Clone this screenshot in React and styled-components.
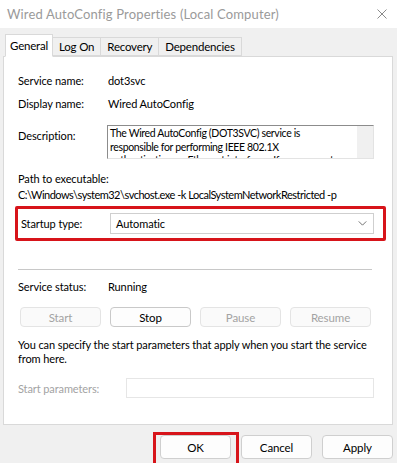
import React from 'react'
import styled, { createGlobalStyle } from 'styled-components'

const GlobalStyle = createGlobalStyle`
    html, body {
        margin: 0;
        padding: 0;
        width: 397px;
        height: 463px;
        overflow: hidden;
        background: #f0f0f0;
    }
    body {
        font-family: Lato, "Liberation Sans", sans-serif;
        font-size: 11px;
        letter-spacing: -0.1px;
        color: #000;
    }
`

const tabs = ['General', 'Log On', 'Recovery', 'Dependencies']

const serviceButtons = [
    { label: 'Start', disabled: true },
    { label: 'Stop', disabled: false },
    { label: 'Pause', disabled: true },
    { label: 'Resume', disabled: true },
]

const App = () => {
    return (
        <Window>
            <GlobalStyle />
            <TitleBar>
                <Title>Wired AutoConfig Properties (Local Computer)</Title>
                <CloseIcon viewBox="0 0 10 10">
                    <path d="M0.5 0.5 L9.5 9.5 M9.5 0.5 L0.5 9.5" stroke="#8a8a8a" strokeWidth="1" />
                </CloseIcon>
            </TitleBar>

            <TabRow>
                {tabs.map((t, i) => (
                    <Tab key={t} active={i === 0}>{t}</Tab>
                ))}
            </TabRow>

            <Panel>
                <InfoRow>
                    <Label>Service name:</Label>
                    <Value>dot3svc</Value>
                </InfoRow>
                <InfoRow gap={7}>
                    <Label>Display name:</Label>
                    <Value>Wired AutoConfig</Value>
                </InfoRow>
                <InfoRow gap={13}>
                    <Label offset={3}>Description:</Label>
                    <DescBox>
                        <DescText>
                            The Wired AutoConfig (DOT3SVC) service is<br />
                            responsible for performing IEEE 802.1X<br />
                            authentication on Ethernet interfaces. If your current
                        </DescText>
                        <ScrollTrack />
                    </DescBox>
                </InfoRow>

                <PathLabel>Path to executable:</PathLabel>
                <PathValue>C:\Windows\system32\svchost.exe -k LocalSystemNetworkRestricted -p</PathValue>

                <Highlight>
                    <Label>Startup type:</Label>
                    <Select>
                        <span>Automatic</span>
                        <Chevron viewBox="0 0 10 6">
                            <path d="M0.5 0.5 L5 5 L9.5 0.5" fill="none" stroke="#555" strokeWidth="1" />
                        </Chevron>
                    </Select>
                </Highlight>

                <Separator />

                <InfoRow gap={9}>
                    <Label>Service status:</Label>
                    <Value>Running</Value>
                </InfoRow>

                <ButtonRow>
                    {serviceButtons.map(b => (
                        <ServiceButton key={b.label} disabled={b.disabled}>{b.label}</ServiceButton>
                    ))}
                </ButtonRow>

                <Note>
                    You can specify the start parameters that apply when you start the service<br />
                    from here.
                </Note>

                <ParamRow>
                    <ParamLabel>Start parameters:</ParamLabel>
                    <ParamInput />
                </ParamRow>
            </Panel>

            <Footer>
                <OkFrame>
                    <DialogButton>OK</DialogButton>
                </OkFrame>
                <DialogButton>Cancel</DialogButton>
                <DialogButton>Apply</DialogButton>
            </Footer>
        </Window>
    )
}

export default App

const Window = styled.div`
    width: 397px;
    height: 463px;
    background: #f0f0f0;
    display: flex;
    flex-direction: column;
    overflow: hidden;
    & > * {
        flex-shrink: 0;
    }
`

// Title bar
const TitleBar = styled.div`
    height: 28px;
    background: #fff;
    display: flex;
    align-items: center;
    justify-content: space-between;
    padding: 0 5px 0 7px;
`

const Title = styled.div`
    font-size: 13px;
    color: #9a9a9a;
    letter-spacing: 0.15px;
`

const CloseIcon = styled.svg`
    width: 10px;
    height: 10px;
    margin-right: 5px;
`

// Tabs
const TabRow = styled.div`
    display: flex;
    align-items: flex-end;
    margin-top: 8px;
    padding-left: 5px;
    height: 20px;
    position: relative;
    z-index: 1;
`

const Tab = styled.div`
    height: ${p => (p.active ? '21px' : '17px')};
    padding: 0 ${p => (p.active ? '4px' : '6px')};
    margin-right: -1px;
    display: flex;
    align-items: center;
    background: ${p => (p.active ? '#fff' : '#f0f0f0')};
    border: 1px solid #d9d9d9;
    border-bottom: 1px solid ${p => (p.active ? '#fff' : '#d9d9d9')};
    margin-bottom: ${p => (p.active ? '-1px' : '0')};
    font-size: 11.5px;
    letter-spacing: -0.2px;
`

// Panel
const Panel = styled.div`
    margin: 0 4px 0 3px;
    height: 369px;
    box-sizing: border-box;
    background: #fff;
    border: 1px solid #d9d9d9;
    padding: 16px 18px 0 14px;
    display: flex;
    flex-direction: column;
    & > * {
        flex-shrink: 0;
    }
`

const InfoRow = styled.div`
    display: grid;
    grid-template-columns: 90px 1fr;
    align-items: start;
    margin-top: ${p => p.gap || 0}px;
    line-height: 16px;
`

const Label = styled.div`
    margin-top: ${p => p.offset || 0}px;
    white-space: nowrap;
`

const Value = styled.div`
    white-space: nowrap;
`

const DescBox = styled.div`
    height: 34px;
    box-sizing: border-box;
    border: 1px solid #e3e3e3;
    border-top-color: #8c8c8c;
    border-left-color: #8c8c8c;
    display: flex;
    overflow: hidden;
    margin-left: -1px;
`

const DescText = styled.div`
    flex: 1;
    padding: 1px 2px 0 2px;
    font-size: 10.5px;
    letter-spacing: -0.35px;
    line-height: 13.5px;
    white-space: nowrap;
    overflow: hidden;
`

const ScrollTrack = styled.div`
    width: 16px;
    background: #f0f0f0;
`

const PathLabel = styled.div`
    margin-top: 12px;
    line-height: 16px;
`

const PathValue = styled.div`
    line-height: 16px;
    white-space: nowrap;
    letter-spacing: -0.5px;
`

const Highlight = styled.div`
    margin: 3px -12px 0 -3px;
    height: 35px;
    box-sizing: border-box;
    border: 3px solid #d7141a;
    border-radius: 2px;
    display: grid;
    grid-template-columns: 90px 1fr;
    align-items: center;
    padding: 0 9px 0 3px;
`

const Select = styled.div`
    height: 21px;
    box-sizing: border-box;
    border: 1px solid #cfcfcf;
    display: flex;
    align-items: center;
    justify-content: space-between;
    padding: 0 6px 0 5px;
    margin-left: -1px;
`

const Chevron = styled.svg`
    width: 9px;
    height: 5px;
`

const Separator = styled.div`
    margin-top: 28px;
    height: 1px;
    background: #c8c8c8;
    margin-right: 2px;
`

const ButtonRow = styled.div`
    display: flex;
    gap: 9px;
    margin: 12px 0 0 2px;
`

const ServiceButton = styled.div`
    width: 81px;
    height: 20px;
    box-sizing: border-box;
    display: flex;
    align-items: center;
    justify-content: center;
    border: 1px solid ${p => (p.disabled ? '#e4e4e4' : '#c9c9c9')};
    border-radius: 4px;
    background: ${p => (p.disabled ? '#fafafa' : '#fdfdfd')};
    color: ${p => (p.disabled ? '#a3a3a3' : '#000')};
    font-size: 11.5px;
`

const Note = styled.div`
    margin-top: 11px;
    line-height: 14px;
    white-space: nowrap;
`

const ParamRow = styled.div`
    margin-top: 12px;
    display: grid;
    grid-template-columns: 108px 1fr;
    align-items: center;
`

const ParamLabel = styled.div`
    color: #a3a3a3;
`

const ParamInput = styled.div`
    height: 20px;
    box-sizing: border-box;
    border: 1px solid #e6e6e6;
    background: #fff;
`

// Footer
const Footer = styled.div`
    display: flex;
    justify-content: flex-end;
    align-items: flex-start;
    padding: 10px 4px 0 0;
    gap: 10px;
`

const OkFrame = styled.div`
    margin: -3px -8px 0 0;
    border: 3px solid #d7141a;
    border-bottom: none;
    padding: 0 5px 0 4px;
    height: 30px;
`

const DialogButton = styled.div`
    width: 71px;
    height: 24px;
    box-sizing: border-box;
    display: flex;
    align-items: center;
    justify-content: center;
    border: 1px solid #cfcfcf;
    border-radius: 4px;
    background: #fdfdfd;
    font-size: 11.5px;
`
